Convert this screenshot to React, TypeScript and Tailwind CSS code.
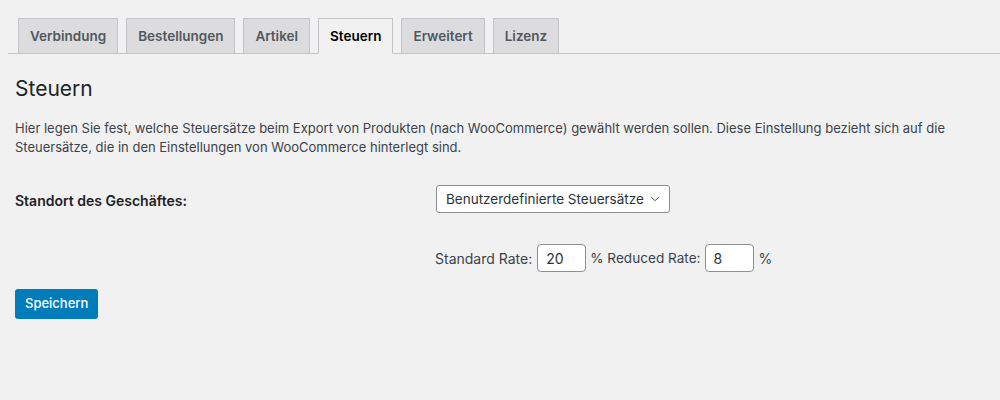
import {ChevronDown} from "lucide-react";

const tabs = ["Verbindung", "Bestellungen", "Artikel", "Steuern", "Erweitert", "Lizenz"];

export default function App() {
    const active = "Steuern";

    return (
        <div className="w-[1000px] h-[400px] bg-[#f1f1f1] text-[#1d2327] font-['Inter',sans-serif] overflow-hidden">
            <div className="pt-[18px] pl-[8px]">
                <div className="flex items-end gap-[8px] pl-[10px] border-b border-[#c3c4c7] h-[36px]">
                    {tabs.map((t) => (
                        <div
                            key={t}
                            className={
                                t === active
                                    ? "h-[36px] -mb-px px-[11px] flex items-center border border-[#c3c4c7] border-b-[#f1f1f1] bg-[#f1f1f1] text-black text-[13.5px] font-semibold"
                                    : "h-[35px] px-[11px] flex items-center border border-[#c3c4c7] border-b-0 bg-[#dcdcde] text-[#50575e] text-[13.5px] font-semibold"
                            }
                        >
                            {t}
                        </div>
                    ))}
                </div>
            </div>

            <div className="px-[15px]">
                <h1 className="text-[21px] leading-[24px] mt-[23px]">Steuern</h1>
                <p className="text-[13px] leading-[19px] mt-[18px] text-[#3c434a] max-w-[960px]">
                    Hier legen Sie fest, welche Steuersätze beim Export von Produkten (nach WooCommerce) gewählt werden sollen. Diese Einstellung bezieht sich auf die Steuersätze, die in den Einstellungen von WooCommerce hinterlegt sind.
                </p>

                <div className="flex mt-[28px]">
                    <div className="w-[421px] pt-[5px] text-[14px] font-semibold text-[#1d2327]">Standort des Geschäftes:</div>
                    <div className="flex flex-col gap-[31px]">
                        <div className="h-[28px] w-[234px] flex items-center justify-between pl-[9px] pr-[7px] bg-white border border-[#8c8f94] rounded-[3px] text-[13.5px] text-[#2c3338] whitespace-nowrap">
                            <span>Benutzerdefinierte Steuersätze</span>
                            <ChevronDown className="w-[14px] h-[14px] shrink-0" strokeWidth={1.5}/>
                        </div>
                        <div className="flex items-center text-[14px] text-[#3c434a] -ml-px">
                            <span>Standard Rate:</span>
                            <div className="ml-[5px] h-[28px] w-[49px] bg-white border border-[#8c8f94] rounded-[4px] flex items-center pl-[8px] text-[#2c3338]">20</div>
                            <span className="ml-[4px] text-[13.6px]">% Reduced Rate:</span>
                            <div className="ml-[4px] h-[28px] w-[49px] bg-white border border-[#8c8f94] rounded-[4px] flex items-center pl-[8px] text-[#2c3338]">8</div>
                            <span className="ml-[5px]">%</span>
                        </div>
                    </div>
                </div>

                <button className="mt-[17px] h-[30px] px-[10px] bg-[#007cba] text-white text-[13px] font-medium rounded-[3px]">
                    Speichern
                </button>
            </div>
        </div>
    );
}
